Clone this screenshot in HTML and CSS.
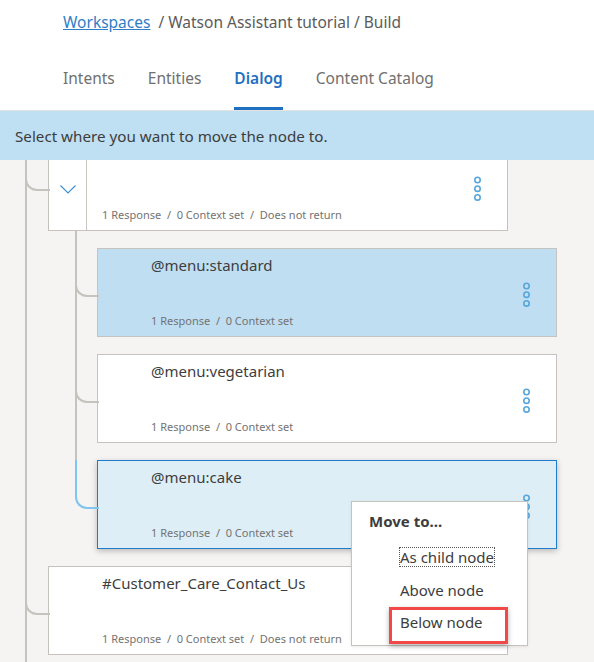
FILE: index.html
```html
<!DOCTYPE html>
<html lang="en">
<head>
<meta charset="utf-8">
<title>Watson Assistant tutorial - Dialog</title>
<link rel="stylesheet" href="styles.css">
</head>
<body>
<header class="header">
  <nav class="crumbs"><a class="crumb-link" href="#">Workspaces</a><span class="crumb-rest">/ Watson Assistant tutorial / Build</span></nav>
  <ul class="tabs">
    <li class="tab">Intents</li>
    <li class="tab">Entities</li>
    <li class="tab tab-active">Dialog</li>
    <li class="tab">Content Catalog</li>
  </ul>
</header>
<div class="banner">Select where you want to move the node to.</div>
<main class="canvas">
  <div class="tree">
    <div class="node node-root node-first">
      <div class="card">
        <div class="toggle">
          <svg class="chevron" width="16" height="9" viewBox="0 0 16 9"><path d="M0.5 0.5 L8 8 L15.5 0.5" fill="none" stroke="#3a8fd5" stroke-width="1.1"/></svg>
        </div>
        <div class="card-body card-body-toggle">
          <div class="title"></div>
          <div class="meta">1 Response&nbsp; / &nbsp;0 Context set&nbsp; / &nbsp;Does not return</div>
        </div>
        <svg class="dots" width="9" height="26" viewBox="0 0 9 26"><circle cx="4.5" cy="4" r="2.7"/><circle cx="4.5" cy="12.7" r="2.7"/><circle cx="4.5" cy="21.4" r="2.7"/></svg>
      </div>
    </div>
    <div class="children">
      <div class="node node-child">
        <div class="card card-selected">
          <div class="card-body">
            <div class="title">@menu:standard</div>
            <div class="meta">1 Response&nbsp; / &nbsp;0 Context set</div>
          </div>
          <svg class="dots" width="9" height="26" viewBox="0 0 9 26"><circle cx="4.5" cy="4" r="2.7"/><circle cx="4.5" cy="12.7" r="2.7"/><circle cx="4.5" cy="21.4" r="2.7"/></svg>
        </div>
      </div>
      <div class="node node-child">
        <div class="card">
          <div class="card-body">
            <div class="title">@menu:vegetarian</div>
            <div class="meta">1 Response&nbsp; / &nbsp;0 Context set</div>
          </div>
          <svg class="dots" width="9" height="26" viewBox="0 0 9 26"><circle cx="4.5" cy="4" r="2.7"/><circle cx="4.5" cy="12.7" r="2.7"/><circle cx="4.5" cy="21.4" r="2.7"/></svg>
        </div>
      </div>
      <div class="node node-child node-moving">
        <div class="card card-moving">
          <div class="card-body">
            <div class="title">@menu:cake</div>
            <div class="meta">1 Response&nbsp; / &nbsp;0 Context set</div>
          </div>
          <svg class="dots" width="9" height="26" viewBox="0 0 9 26"><circle cx="4.5" cy="4" r="2.7"/><circle cx="4.5" cy="12.7" r="2.7"/><circle cx="4.5" cy="21.4" r="2.7"/></svg>
        </div>
        <div class="menu">
          <div class="menu-title">Move to...</div>
          <ul class="menu-list">
            <li class="menu-item"><span class="focus">As child node</span></li>
            <li class="menu-item">Above node</li>
            <li class="menu-item"><span class="highlight">Below node</span></li>
          </ul>
        </div>
      </div>
    </div>
    <div class="node node-root">
      <div class="card">
        <div class="card-body">
          <div class="title">#Customer_Care_Contact_Us</div>
          <div class="meta">1 Response&nbsp; / &nbsp;0 Context set&nbsp; / &nbsp;Does not return</div>
        </div>
      </div>
    </div>
  </div>
</main>
</body>
</html>
```

FILE: styles.css
```css
* { box-sizing: border-box; }

html, body {
  margin: 0;
  padding: 0;
  background: #ffffff;
  font-family: "Noto Sans", "Open Sans", "Liberation Sans", sans-serif;
  color: #3d3d3d;
}

.header {
  padding-left: 63px;
  border-bottom: 1px solid #e2e2e2;
  height: 111px;
}

.crumbs {
  padding-top: 10px;
  font-size: 15.5px;
  line-height: 24px;
  color: #5b5b5b;
}

.crumb-link {
  color: #2f7dc6;
  text-decoration: underline;
  margin-right: 8px;
}

.tabs {
  list-style: none;
  margin: 32px 0 0;
  padding: 0;
  display: flex;
  gap: 33px;
}

.tab {
  font-size: 15.5px;
  line-height: 24px;
  color: #707070;
  padding-bottom: 17px;
  border-bottom: 3px solid transparent;
}

.tab-active {
  color: #1f70c1;
  font-weight: 600;
  border-bottom-color: #1f70c1;
}

.banner {
  height: 49px;
  background: #bfdff3;
  padding-left: 15px;
  display: flex;
  align-items: center;
  font-size: 15.2px;
  color: #3d3d3d;
}

.canvas {
  height: 502px;
  background: #f5f4f2;
  overflow: hidden;
  display: flex;
}

.tree {
  flex: 1;
  margin-left: 25px;
  border-left: 2px solid #c6c3be;
  padding-left: 21px;
  display: flex;
  flex-direction: column;
  gap: 17px;
}

.node {
  position: relative;
}

.node::before {
  content: "";
  position: absolute;
  top: 0;
  height: 47px;
  border-left: 2px solid #c6c3be;
  border-bottom: 2px solid #c6c3be;
  border-bottom-left-radius: 12px;
}

.node-root::before {
  left: -23px;
  width: 23px;
}

.node-first {
  margin-top: -18px;
}

.children {
  position: relative;
  margin-left: 27px;
  padding-left: 22px;
  display: flex;
  flex-direction: column;
  gap: 17px;
}

.children::before {
  content: "";
  position: absolute;
  left: 0;
  top: -17px;
  bottom: 89px;
  width: 2px;
  background: #c6c3be;
}

.node-child::before {
  left: -22px;
  width: 22px;
}

.node-moving::before {
  border-color: #80c4f0;
}

.card {
  width: 460px;
  height: 89px;
  background: #ffffff;
  border: 1px solid #c6c3be;
  display: flex;
  align-items: stretch;
}

.card-selected {
  background: #bfdef2;
}

.card-moving {
  background: #ddeef7;
  border-color: #1f7bcb;
  box-shadow: 0 2px 6px rgba(0, 0, 0, 0.25);
}

.toggle {
  width: 38px;
  border-right: 1px solid #c9c6c1;
  display: flex;
  align-items: center;
  justify-content: center;
  padding-top: 5px;
}

.card-body {
  flex: 1;
  padding: 6px 0 7px 53px;
  display: flex;
  flex-direction: column;
  justify-content: space-between;
}

.card-body-toggle {
  padding-left: 15px;
}

.title {
  font-size: 15px;
  line-height: 20px;
  height: 20px;
  color: #3d3d3d;
}

.meta {
  font-size: 11px;
  line-height: 16px;
  color: #737373;
}

.dots {
  align-self: center;
  margin: 4px 25px 0 0;
  fill: none;
  stroke: #58a6dc;
  stroke-width: 1.6;
}

.menu {
  position: absolute;
  left: 254px;
  top: 41px;
  width: 177px;
  height: 145px;
  background: #ffffff;
  border: 1px solid #c6c3be;
  box-shadow: 0 1px 3px rgba(0, 0, 0, 0.08);
  padding: 9px 0 0 17px;
  z-index: 10;
}

.menu-title {
  font-size: 15px;
  line-height: 20px;
  font-weight: 700;
  color: #3d3d3d;
}

.menu-list {
  list-style: none;
  margin: 16px 0 0;
  padding: 0 0 0 31px;
  display: flex;
  flex-direction: column;
  gap: 12.5px;
}

.menu-item {
  font-size: 15px;
  line-height: 20px;
  color: #3d3d3d;
}

.focus {
  outline: 1px dotted #555555;
  outline-offset: -1px;
  padding: 0 1px;
  margin-left: -1px;
}

.highlight {
  position: relative;
}

.highlight::after {
  content: "";
  position: absolute;
  left: -11px;
  top: -5px;
  width: 113px;
  height: 31px;
  border: 3px solid #f14848;
  box-shadow: 0 2px 5px rgba(0, 0, 0, 0.3);
}
```
